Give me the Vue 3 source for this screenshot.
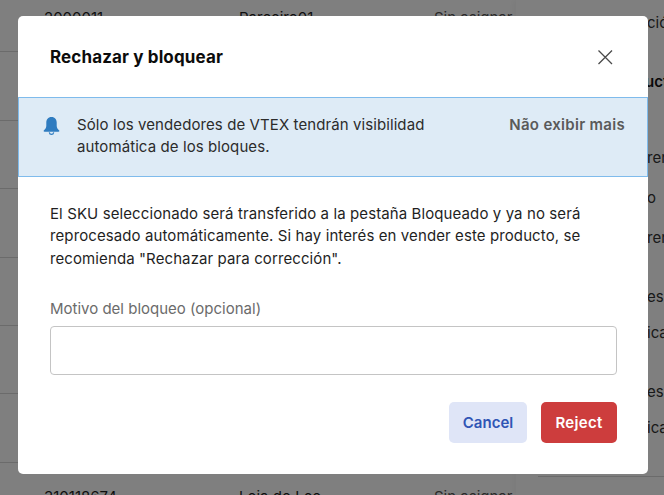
<script setup>
const rows = [
  { id: '2000011', seller: 'Parceiro01' },
  { id: '', seller: '' },
  { id: '', seller: '' },
  { id: '', seller: '' },
  { id: '', seller: '' },
  { id: '', seller: '' },
  { id: '', seller: '' },
  { id: '310118674', seller: 'Loja do Leo' }
]
const side = [
  { text: 'ción', h: 59 },
  { text: 'ucto', h: 76, bold: true },
  { text: 'ren', h: 40 },
  { text: 'o', h: 40 },
  { text: 'ren', h: 59 },
  { text: 'es', h: 36 },
  { text: 'ica', h: 59 },
  { text: 'es', h: 36 },
  { text: 'ica', h: 48 }
]
</script>

<template>
  <div class="page">
    <div class="table">
      <div v-for="(r, i) in rows" :key="i" class="row">
        <span class="c1">{{ r.id }}</span>
        <span class="c2">{{ r.seller }}</span>
        <span v-if="r.id" class="c3">Sin asignar</span>
      </div>
    </div>
    <div class="side">
      <div v-for="(s, i) in side" :key="i" class="side-item" :class="{ bold: s.bold }" :style="{ height: s.h + 'px' }">{{ s.text }}</div>
      <div class="side-rule"></div>
    </div>

    <div class="overlay">
      <div class="modal">
        <header class="head">
          <h2 class="title">Rechazar y bloquear</h2>
          <svg class="close" width="18" height="18" viewBox="0 0 18 18" fill="none" stroke="#4a4a4a" stroke-width="1.3">
            <path d="M2.5 2.5l13.5 13.5M16 2.5L2.5 16" />
          </svg>
        </header>
        <div class="alert">
          <svg class="bell" width="19" height="20" viewBox="0 0 19 20">
            <path fill="#2f7cc0" d="M9.5 1C6 1 4.3 3.6 4.3 6.6v3.2c0 1.9-.8 3.3-2.3 4.5-.7.6-.4 1.5.5 1.5h14c.9 0 1.2-.9.5-1.5-1.5-1.2-2.3-2.6-2.3-4.5V6.6C14.7 3.6 13 1 9.5 1z" />
            <path fill="none" stroke="#2f7cc0" stroke-width="1.2" d="M7.3 16.3c.2 1.3 1.1 2.1 2.2 2.1s2-.8 2.2-2.1" />
          </svg>
          <p class="alert-text">Sólo los vendedores de VTEX tendrán visibilidad automática de los bloques.</p>
          <span class="dismiss">Não exibir mais</span>
        </div>
        <div class="body">
          <p class="desc">El SKU seleccionado será transferido a la pestaña Bloqueado y ya no será reprocesado automáticamente. Si hay interés en vender este producto, se recomienda "Rechazar para corrección".</p>
          <label class="label" for="reason">Motivo del bloqueo (opcional)</label>
          <input id="reason" class="input" type="text" />
        </div>
        <footer class="foot">
          <button class="btn cancel">Cancel</button>
          <button class="btn reject">Reject</button>
        </footer>
      </div>
    </div>
  </div>
</template>

<style scoped>
.page {
  position: relative;
  width: 664px;
  height: 495px;
  overflow: hidden;
  background: #fff;
  display: flex;
  font-family: Inter, "Liberation Sans", sans-serif;
  font-size: 15px;
  color: #1f1f1f;
}
.table {
  width: 516px;
  flex: none;
  margin-top: -16px;
}
.row {
  height: 68.4px;
  box-sizing: border-box;
  border-bottom: 1px solid #d6d6d6;
  display: flex;
  align-items: flex-start;
  padding-top: 24px;
}
.c1 { width: 239px; padding-left: 44px; box-sizing: border-box; }
.c2 { width: 195px; }
.c3 { color: #555; }
.side {
  position: relative;
  flex: 1;
  padding-left: 131px;
  box-sizing: border-box;
  white-space: nowrap;
  padding-top: 13px;
  background: #fff;
  box-shadow: -3px 0 6px rgba(0, 0, 0, 0.04);
}
.side-item { line-height: 20px; color: #333; }
.side-item.bold { font-weight: 600; margin-left: -2px; color: #111; }
.side-rule {
  position: absolute;
  left: 22px;
  right: 0;
  top: 476px;
  height: 1px;
  background: #d6d6d6;
}
.overlay {
  position: absolute;
  inset: 0;
  background: rgba(0, 0, 0, 0.5);
  padding: 16px 16px 21px 18px;
  box-sizing: border-box;
}
.modal {
  height: 458px;
  background: #fff;
  border-radius: 5px;
  display: flex;
  flex-direction: column;
}
.head {
  height: 81px;
  flex: none;
  box-sizing: border-box;
  padding: 0 34px 0 32px;
  display: flex;
  align-items: center;
  justify-content: space-between;
}
.title {
  margin: 0;
  font-size: 17px;
  font-weight: 700;
  letter-spacing: 0.13px;
  color: #0c0c0c;
}
.alert {
  flex: none;
  height: 80px;
  box-sizing: border-box;
  background: #deebf6;
  border: 1px solid #7fbbec;
  padding: 16px 22px 0 23px;
  display: flex;
  align-items: flex-start;
}
.bell { flex: none; margin-top: 2px; }
.alert-text {
  margin: 0 0 0 16px;
  width: 375px;
  line-height: 22px;
  letter-spacing: 0.09px;
  color: #2c2c2c;
}
.dismiss {
  margin-left: auto;
  line-height: 22px;
  font-weight: 600;
  letter-spacing: 0.3px;
  color: #5a5a5a;
  white-space: nowrap;
}
.body {
  padding: 26px 31px 0 32px;
  display: flex;
  flex-direction: column;
}
.desc {
  margin: 0;
  line-height: 22.4px;
  letter-spacing: 0.1px;
  color: #1f1f1f;
}
.label {
  margin-top: 29px;
  line-height: 20px;
  color: #6b6b6b;
}
.input {
  margin-top: 7px;
  height: 49px;
  box-sizing: border-box;
  border: 1px solid #c4c4c4;
  border-radius: 4px;
  background: #fff;
  outline: none;
}
.foot {
  margin-top: 27px;
  padding: 0 31px 0 0;
  display: flex;
  justify-content: flex-end;
  gap: 14px;
}
.btn {
  height: 41px;
  border: none;
  border-radius: 5px;
  font-family: inherit;
  font-size: 15px;
  font-weight: 600;
  padding: 0;
}
.cancel { width: 78px; background: #dfe5f7; color: #2f55b5; }
.reject { width: 76px; background: #cd3d3d; color: #fff; letter-spacing: 0.3px; }
</style>
